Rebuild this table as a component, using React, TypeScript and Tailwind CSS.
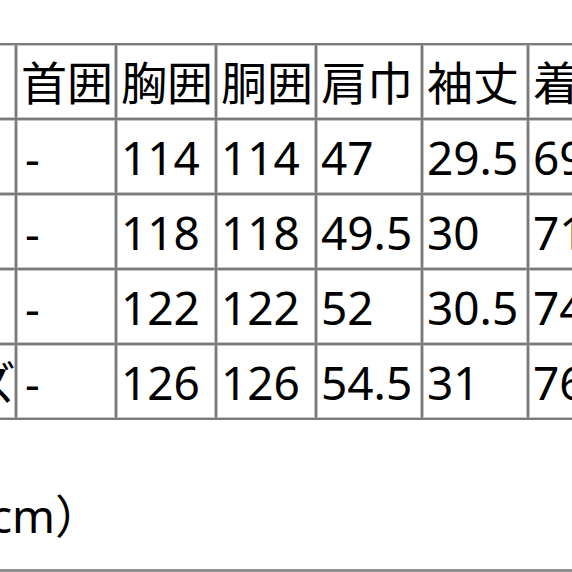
import React from "react";

const rows: string[][] = [
  ["", "首囲", "胸囲", "胴囲", "肩巾", "袖丈", "着丈"],
  ["S", "-", "114", "114", "47", "29.5", "69.5"],
  ["M", "-", "118", "118", "49.5", "30", "71.5"],
  ["L", "-", "122", "122", "52", "30.5", "74"],
  ["XLサイズ", "-", "126", "126", "54.5", "31", "76.5"],
];

export default function App() {
  return (
    <div className="relative h-[572px] w-[572px] overflow-hidden border-b-[3px] border-[#8f8f8f] bg-white font-['Noto_Sans','Noto_Sans_CJK_JP',sans-serif] text-black">
      <div className="ml-[-187px] mt-[43px] grid w-max auto-rows-[73px] grid-cols-[200px_98px_98px_98px_104px_104px_104px] gap-[2px] bg-[#7b7b7b] p-[2px]">
        {rows.map((r, ri) =>
          r.map((c, ci) => (
            <div
              key={`${ri}-${ci}`}
              className={
                ci === 0
                  ? "flex items-center overflow-hidden whitespace-nowrap border border-[#c4c4c4] bg-white pl-[12px] text-[46px] leading-none"
                  : c === "-"
                  ? "flex items-center overflow-hidden whitespace-nowrap border border-[#c4c4c4] bg-white pl-[7px] text-[46px] leading-none"
                  : "flex items-center overflow-hidden whitespace-nowrap border border-[#c4c4c4] bg-white pl-[3px] text-[46px] leading-none"
              }
            >
              {c}
            </div>
          ))
        )}
      </div>
      <div className="ml-[-194px] mt-[72px] whitespace-nowrap text-[46px] leading-[46px]">
        （単位：cm）
      </div>
    </div>
  );
}
